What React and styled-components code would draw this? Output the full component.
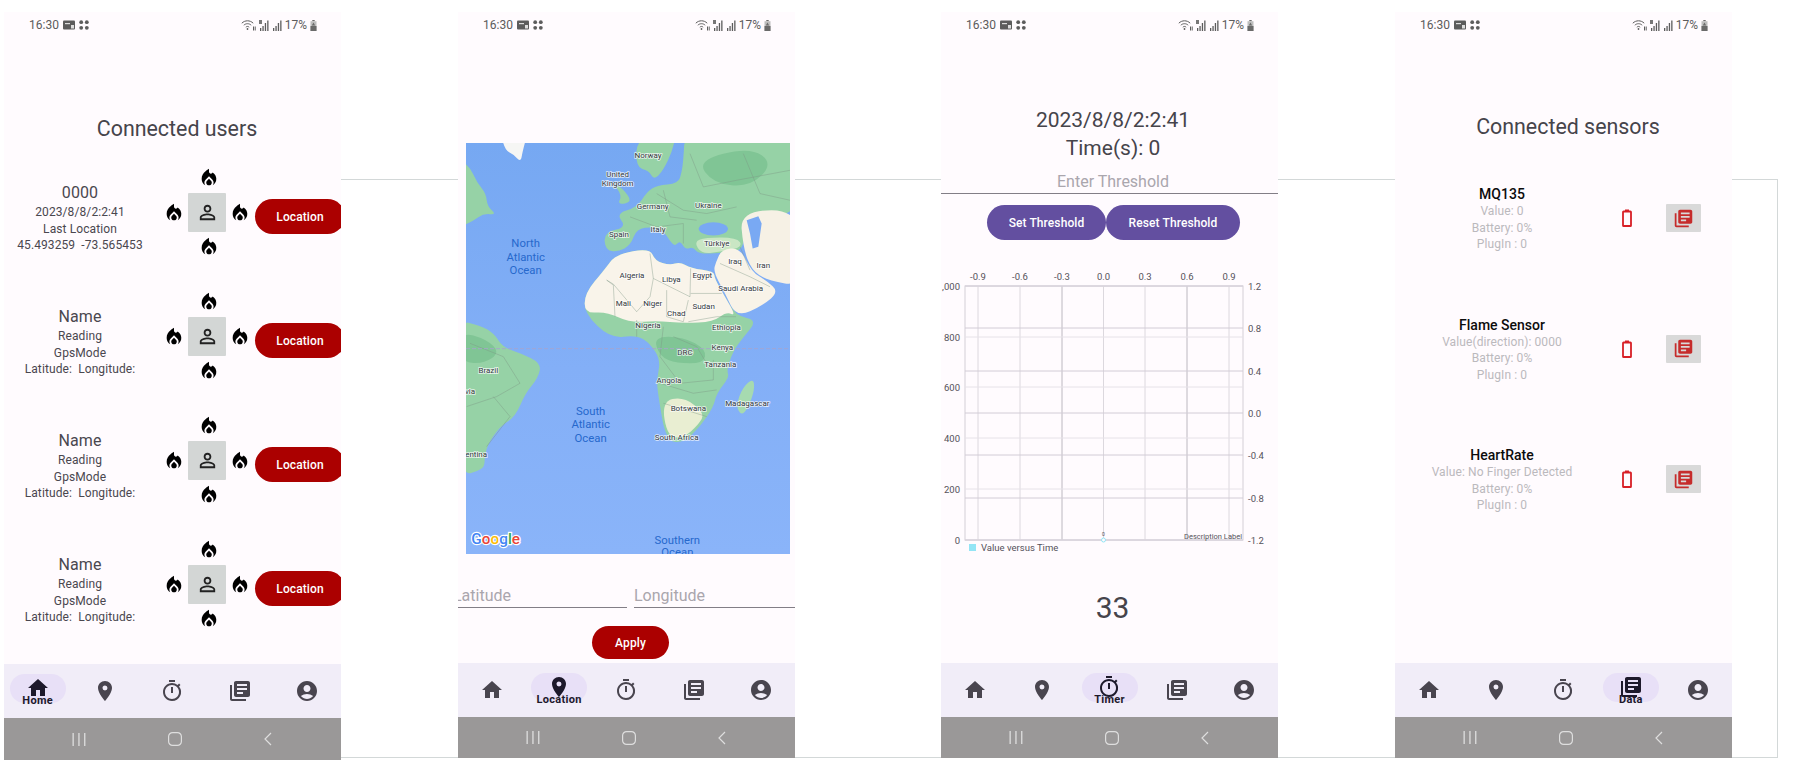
import React from 'react'
import styled, { createGlobalStyle } from 'styled-components'
import {
  MdHome,
  MdPlace,
  MdOutlineTimer,
  MdLibraryBooks,
  MdAccountCircle,
  MdLocalFireDepartment,
  MdPersonOutline,
} from 'react-icons/md'

const GlobalStyle = createGlobalStyle`
  html, body { margin: 0; padding: 0; background: #fff; }
  body { font-family: Roboto, "Liberation Sans", sans-serif; }
`

const Page = styled.div`
  position: relative;
  width: 1798px;
  height: 782px;
  overflow: hidden;
  display: flex;
  align-items: flex-start;
  padding: 12px 0 0 4px;
  box-sizing: border-box;
  background: #fff;
`

/* wires running behind the phones */
const Wires = styled.div`
  position: absolute;
  left: 341px;
  top: 179px;
  width: 1437px;
  height: 579px;
  box-sizing: border-box;
  border: 1.5px solid #d3d8d8;
  border-left: 0;
`

const Phone = styled.div`
  position: relative;
  z-index: 1;
  flex: none;
  width: 337px;
  height: ${p => p.$height}px;
  margin-left: ${p => p.$gap}px;
  background: #fffbfe;
  overflow: hidden;
  display: flex;
  flex-direction: column;
`

const StatusRow = styled.div`
  flex: none;
  height: 26px;
  padding: 0 24px 0 25px;
  display: flex;
  align-items: center;
  justify-content: space-between;
  font-size: 12px;
  color: #5c5c5c;
`

const StatusGroup = styled.div`
  display: flex;
  align-items: center;
  gap: ${p => p.$gap}px;
`

const Screen = styled.div`
  flex: 1;
  min-height: 0;
  display: flex;
  flex-direction: column;
`

const Title = styled.div`
  margin-top: ${p => p.$top}px;
  padding-left: 9px;
  font-size: 21.4px;
  line-height: 28px;
  color: #46444b;
  text-align: center;
`

/* ---------- users screen ---------- */
const UserList = styled.div`
  margin-top: 27px;
  display: flex;
  flex-direction: column;
  gap: 38px;
`

const UserRow = styled.div`
  height: 86px;
  display: flex;
  align-items: flex-start;
`

const UserInfo = styled.div`
  flex: none;
  width: 152px;
  padding-top: 12px;
  text-align: center;
  color: #4a474f;
  font-size: 12px;
  line-height: 16.5px;
  letter-spacing: 0.1px;
`

const UserName = styled.div`
  font-size: 16px;
  line-height: 22px;
`

const Cross = styled.div`
  flex: none;
  margin-left: 7px;
  display: grid;
  grid-template-columns: 22px 38px 22px;
  grid-template-rows: 16px 39px 16px;
  column-gap: 3px;
  row-gap: 7px;
  place-items: center;
`

const TopFlame = styled.div`
  grid-column: 2;
  grid-row: ${p => p.$row};
  display: flex;
  margin-left: 4px;
`

const SideFlame = styled.div`
  grid-column: ${p => p.$col};
  grid-row: 2;
  display: flex;
`

const PersonBox = styled.div`
  grid-column: 2;
  grid-row: 2;
  width: 38px;
  height: 39px;
  background: #d3d6d5;
  border-radius: 1px;
  display: flex;
  align-items: center;
  justify-content: center;
  color: #222;
`

const RedButton = styled.div`
  flex: none;
  width: ${p => p.$width}px;
  height: ${p => p.$height}px;
  margin-top: ${p => p.$top || 0}px;
  margin-left: ${p => p.$left || 0}px;
  border-radius: 18px;
  background: #ab0000;
  color: #fff;
  font-size: 12px;
  font-weight: 500;
  letter-spacing: 0.1px;
  display: flex;
  align-items: center;
  justify-content: center;
`

/* ---------- location screen ---------- */
const MapFrame = styled.div`
  margin: 105px 5px 0 8px;
  height: 411px;
  overflow: hidden;
`

const CoordRow = styled.div`
  margin-top: 28px;
  display: flex;
  gap: 7px;
`

const CoordField = styled.div`
  flex: ${p => p.$flex};
  height: 25px;
  line-height: 27px;
  font-size: 16px;
  color: #aaa6ad;
  border-bottom: 1.5px solid #827e86;
  white-space: nowrap;
  text-indent: ${p => p.$indent || 0}px;
`

const ApplyRow = styled.div`
  margin-top: 18px;
  display: flex;
  padding-left: 134px;
`

/* ---------- timer screen ---------- */
const Stamp = styled.div`
  font-size: 21px;
  line-height: 28px;
  padding-left: 7px;
  color: #46444b;
  text-align: center;
  margin-top: ${p => p.$top || 0}px;
`

const ThresholdField = styled.div`
  margin-top: 9px;
  height: 22px;
  padding-left: 7px;
  line-height: 22px;
  font-size: 16px;
  color: #aaa6ad;
  text-align: center;
  border-bottom: 1.5px solid #827e86;
`

const ThresholdButtons = styled.div`
  margin-top: 11px;
  padding-left: 46px;
  display: flex;
`

const PurpleButton = styled.div`
  width: ${p => p.$width}px;
  height: 35px;
  border-radius: 18px;
  background: #634fa0;
  color: #fff;
  font-size: 12px;
  font-weight: 500;
  letter-spacing: 0.1px;
  display: flex;
  align-items: center;
  justify-content: center;
`

const ChartFrame = styled.div`
  margin-top: 30px;
  height: 290px;
`

const Counter = styled.div`
  margin-top: 30px;
  padding-left: 6px;
  font-size: 30px;
  line-height: 36px;
  color: #46444b;
  text-align: center;
`

/* ---------- data screen ---------- */
const SensorList = styled.div`
  margin-top: 45px;
  display: flex;
  flex-direction: column;
  gap: 62.5px;
`

const SensorRow = styled.div`
  height: 68px;
  display: flex;
  align-items: flex-start;
`

const SensorInfo = styled.div`
  flex: none;
  width: 214px;
  text-align: center;
  color: #bbb9bd;
  font-size: 12px;
  line-height: 16.5px;
  letter-spacing: 0.1px;
`

const SensorName = styled.div`
  color: #0c0c0c;
  font-size: 14px;
  font-weight: 500;
  line-height: 17px;
  letter-spacing: 0;
`

const SensorActions = styled.div`
  margin: 18px 0 0 13px;
  display: flex;
  align-items: center;
  gap: 34px;
`

const DataBox = styled.div`
  width: 35px;
  height: 28px;
  background: #d9d9d9;
  border-radius: 1px;
  display: flex;
  align-items: center;
  justify-content: center;
  color: #c62c2c;
`

/* ---------- bottom bars ---------- */
const NavBar = styled.div`
  flex: none;
  height: 54px;
  background: #f1edf8;
  display: grid;
  grid-template-columns: repeat(5, 1fr);
`

const NavItem = styled.div`
  position: relative;
  display: flex;
  align-items: center;
  justify-content: center;
  color: ${p => (p.$active ? '#1d192b' : '#49454f')};
`

const NavPill = styled.div`
  position: absolute;
  left: 6px;
  top: 10px;
  width: 56px;
  height: 29px;
  border-radius: 15px;
  background: #e8e0f7;
`

const NavIcon = styled.div`
  position: relative;
  display: flex;
  margin-top: ${p => (p.$active ? -6 : 0)}px;
`

const NavLabel = styled.div`
  position: absolute;
  left: 0;
  right: 0;
  top: 30px;
  font-size: 11px;
  line-height: 13px;
  font-weight: 700;
  letter-spacing: 0.3px;
  text-align: center;
  color: #1d192b;
`

const SystemBar = styled.div`
  flex: none;
  height: ${p => p.$height}px;
  background: #9a9898;
  display: flex;
  align-items: center;
  padding-left: 68px;
  gap: 82px;
`

const navItems = [
  { name: 'Home', Icon: MdHome },
  { name: 'Location', Icon: MdPlace },
  { name: 'Timer', Icon: MdOutlineTimer },
  { name: 'Data', Icon: MdLibraryBooks },
  { name: 'Profile', Icon: MdAccountCircle },
]

const users = [
  { name: '0000', lines: ['2023/8/8/2:2:41', 'Last Location', '45.493259\u00a0\u00a0-73.565453'] },
  { name: 'Name', lines: ['Reading', 'GpsMode', 'Latitude:\u00a0\u00a0Longitude:'] },
  { name: 'Name', lines: ['Reading', 'GpsMode', 'Latitude:\u00a0\u00a0Longitude:'] },
  { name: 'Name', lines: ['Reading', 'GpsMode', 'Latitude:\u00a0\u00a0Longitude:'] },
]

const sensors = [
  { name: 'MQ135', value: 'Value: 0' },
  { name: 'Flame Sensor', value: 'Value(direction): 0000' },
  { name: 'HeartRate', value: 'Value: No Finger Detected' },
]

const mapLabels = [
  ['Norway', 594, 77], ['United', 503, 132], ['Kingdom', 503, 161], ['Germany', 608, 228],
  ['Ukraine', 775, 227], ['Spain', 507, 312], ['Italy', 624, 297], ['Türkiye', 800, 339],
  ['Iraq', 855, 395], ['Iran', 940, 407], ['Algeria', 546, 436], ['Libya', 664, 447],
  ['Egypt', 757, 436], ['Saudi Arabia', 872, 475], ['Mali', 520, 521], ['Niger', 608, 521],
  ['Sudan', 761, 528], ['Chad', 679, 550], ['Nigeria', 594, 586], ['Ethiopia', 829, 592],
  ['Kenya', 817, 654], ['DRC', 705, 669], ['Tanzania', 811, 705], ['Brazil', 115, 721],
  ['Bolivia', 40, 784], ['Angola', 657, 751], ['Madagascar', 892, 821], ['Botswana', 715, 836],
  ['South Africa', 680, 923], ['Argentina', 60, 975],
]

const oceanLabels = [
  ['North', 227, 340], ['Atlantic', 227, 380], ['Ocean', 227, 420],
  ['South', 422, 843], ['Atlantic', 422, 883], ['Ocean', 422, 923],
  ['Southern', 682, 1230], ['Ocean', 682, 1268],
]

const mapBorders = [
  'M470 450 L490 465 L495 560',
  'M470 450 L490 462 L560 545 L600 500 L610 445 L600 370',
  'M610 445 L720 500 L722 415',
  'M722 490 L815 490',
  'M650 480 L650 560 L700 575 L715 510',
  'M715 575 L800 560 L858 560',
  'M560 570 L560 620',
  'M640 590 L630 680 L690 760 L790 750 L790 690',
  'M670 620 L740 650 L770 700',
  'M630 760 L730 790 L800 780',
  'M640 820 L770 860',
  'M810 400 L900 440 L960 470',
  'M870 350 L900 420',
  'M620 190 L700 240 L770 250 L860 230',
  'M540 260 L620 290 L700 280 L700 340',
  'M640 180 L660 260 L740 270',
  'M60 640 L160 680 L210 760 L140 800 L50 830',
  'M110 950 L180 860 L130 800',
  'M720 70 L760 170 L860 150 L1020 120',
  'M880 70 L930 190 L1020 210',
]

// rounds a polygon off by running curves through the middle of its edges
const smooth = points => {
  const mid = (a, b) => `${(a[0] + b[0]) / 2} ${(a[1] + b[1]) / 2}`
  const last = points[points.length - 1]
  let d = `M${mid(last, points[0])}`
  points.forEach((p, i) => {
    d += ` Q${p[0]} ${p[1]} ${mid(p, points[(i + 1) % points.length])}`
  })
  return d + ' Z'
}

const land = [
  // greenland
  { fill: '#f6f6f4', pts: [[150, 0], [235, 0], [218, 62], [212, 96], [190, 72], [165, 60]] },
  // north america
  { fill: '#96d2a6', pts: [[20, 80], [60, 110], [80, 155], [108, 190], [112, 228], [140, 254], [100, 250], [70, 272], [20, 295]] },
  // south america
  { fill: '#96d2a6', pts: [[20, 570], [90, 586], [132, 610], [158, 652], [212, 670], [274, 700], [264, 745], [226, 790], [196, 860], [150, 890], [112, 945], [104, 985], [102, 1020], [20, 1040]] },
  { fill: '#80c595', pts: [[30, 605], [110, 628], [150, 668], [100, 702], [30, 695]] },
  // scandinavia
  { fill: '#96d2a6', pts: [[560, 20], [680, 0], [668, 60], [640, 120], [612, 150], [596, 120], [558, 112]] },
  // europe and russia
  { fill: '#96d2a6', pts: [[705, 0], [1060, 0], [1060, 260], [880, 250], [885, 360], [820, 368], [745, 372], [730, 350], [705, 358], [690, 330], [672, 352], [640, 300], [610, 290], [560, 295], [542, 345], [505, 365], [466, 360], [462, 306], [530, 292], [498, 250], [560, 232], [590, 186], [620, 165], [685, 160], [695, 125], [700, 90]] },
  { fill: '#80c595', pts: [[740, 90], [900, 50], [970, 100], [900, 170], [790, 160]] },
  // britain
  { fill: '#96d2a6', pts: [[490, 160], [518, 175], [548, 215], [502, 224], [516, 195]] },
  // middle east
  { fill: '#c9e6c4', pts: [[732, 335], [765, 322], [860, 322], [880, 350], [815, 364], [755, 372]] },
  { fill: '#f6f1e5', pts: [[870, 240], [1060, 240], [1060, 470], [950, 450], [905, 420], [880, 355]] },
  { fill: '#f8f3e8', pts: [[798, 395], [815, 358], [870, 352], [905, 425], [950, 452], [986, 485], [940, 525], [860, 562], [825, 490], [790, 425]] },
  // africa
  { fill: '#96d2a6', pts: [[498, 372], [600, 354], [615, 392], [660, 405], [690, 395], [722, 414], [792, 424], [794, 445], [822, 495], [858, 558], [922, 570], [880, 622], [850, 662], [830, 720], [838, 742], [800, 790], [790, 832], [750, 890], [700, 940], [648, 932], [625, 800], [620, 750], [632, 690], [600, 640], [560, 615], [480, 625], [404, 550], [404, 490], [462, 420]] },
  { fill: '#f9f4ea', pts: [[498, 372], [600, 354], [615, 392], [660, 405], [690, 395], [722, 414], [792, 424], [794, 445], [822, 495], [858, 558], [830, 545], [790, 575], [700, 580], [620, 572], [540, 578], [470, 545], [404, 550], [404, 490], [462, 420]] },
  { fill: '#80c595', pts: [[610, 620], [700, 620], [770, 660], [760, 700], [680, 700], [630, 680]] },
  { fill: '#e9eed2', pts: [[635, 815], [700, 800], [765, 850], [745, 885], [700, 925], [652, 920]] },
  // madagascar
  { fill: '#a6dab0', pts: [[878, 772], [910, 745], [914, 780], [893, 838], [873, 856], [858, 828]] },
]

function WorldMap() {
  return (
    <svg width="324" height="411" viewBox="48 38 972 1235" preserveAspectRatio="none">
      <defs>
        <linearGradient id="sea" x1="0" y1="0" x2="0" y2="1">
          <stop offset="0" stopColor="#76a8f2" />
          <stop offset="0.55" stopColor="#83aff7" />
          <stop offset="1" stopColor="#8ab4f9" />
        </linearGradient>
      </defs>
      <rect x="48" y="38" width="972" height="1235" fill="url(#sea)" />
      {land.map((shape, i) => (
        <path key={i} d={smooth(shape.pts)} fill={shape.fill} />
      ))}
      {/* seas */}
      <ellipse cx="790" cy="296" rx="44" ry="20" fill="#79a9f3" />
      <path d="M890 270 L925 258 L935 280 L925 350 L908 355 L900 310 Z" fill="#79a9f3" />
      {/* borders */}
      {mapBorders.map((d, i) => (
        <path key={i} d={d} fill="none" stroke="#7b9484" strokeWidth="1.2" />
      ))}
      <line x1="48" y1="656" x2="1020" y2="656" stroke="#a6a4cc" strokeWidth="2.5" strokeDasharray="12 6" />
      {/* labels */}
      {mapLabels.map(([text, x, y]) => (
        <text key={text} x={x} y={y} fontFamily="Roboto" fontSize="24" textAnchor="middle" dominantBaseline="central" fill="#33393d" stroke="#fff" strokeWidth="5" strokeOpacity="0.75" paintOrder="stroke">{text}</text>
      ))}
      {oceanLabels.map(([text, x, y]) => (
        <text key={text + y} x={x} y={y} fontFamily="Roboto" fontSize="34" textAnchor="middle" dominantBaseline="central" fill="#2668cc">{text}</text>
      ))}
      <text x="64" y="1244" fontFamily="Roboto" fontSize="46" fontWeight="500" stroke="#fff" strokeWidth="7" paintOrder="stroke">
        <tspan fill="#4285f4">G</tspan>
        <tspan fill="#ea4335">o</tspan>
        <tspan fill="#fbbc05">o</tspan>
        <tspan fill="#4285f4">g</tspan>
        <tspan fill="#34a853">l</tspan>
        <tspan fill="#ea4335">e</tspan>
      </text>
    </svg>
  )
}

const plotLeft = 24
const plotRight = 302
const plotTop = 16
const plotBottom = 270
const gridX = [-0.9, -0.6, -0.3, 0, 0.3, 0.6, 0.9]
const gridXPos = [37, 79, 121, 162.5, 204, 246, 288]
const leftTicks = [['1,000', 16], ['800', 67], ['600', 117], ['400', 168], ['200', 219], ['0', 270]]
const rightTicks = [['1.2', 16], ['0.8', 58], ['0.4', 101], ['0.0', 143], ['-0.4', 185], ['-0.8', 228], ['-1.2', 270]]

function Chart() {
  return (
    <svg width="337" height="290" viewBox="0 0 337 290" fontFamily="Roboto" fontSize="9.5" fill="#55525a">
      <rect x={plotLeft} y={plotTop} width={plotRight - plotLeft} height={plotBottom - plotTop} fill="none" stroke="#d4cfd6" />
      {gridXPos.map((x, i) => (
        <g key={x}>
          <line x1={x} y1={plotTop} x2={x} y2={plotBottom} stroke={i % 3 === 2 ? '#bcb8c0' : '#dcd8de'} />
          <text x={x} y="10" textAnchor="middle">{gridX[i].toFixed(1)}</text>
        </g>
      ))}
      {leftTicks.map(([label, y]) => (
        <g key={label}>
          <line x1={plotLeft} y1={y} x2={plotRight} y2={y} stroke="#e6e2e8" />
          <text x="19" y={y + 3.5} textAnchor="end">{label}</text>
        </g>
      ))}
      {rightTicks.map(([label, y]) => (
        <g key={label}>
          <line x1={plotLeft} y1={y} x2={plotRight} y2={y} stroke="#d2ccd6" />
          <text x="307" y={y + 3.5}>{label}</text>
        </g>
      ))}
      <text x="301" y="269" textAnchor="end" fontSize="7.5">Description Label</text>
      <text x="162.5" y="266" textAnchor="middle" fontSize="5">0</text>
      <circle cx="162.5" cy="270" r="2" fill="#fffbfe" stroke="#93e5f5" />
      <rect x="28" y="274" width="7" height="7" fill="#93e5f5" />
      <text x="40" y="281">Value versus Time</text>
    </svg>
  )
}

function BatteryEmpty() {
  return (
    <svg width="10" height="18" viewBox="0 0 10 18">
      <rect x="3" y="0.5" width="4" height="2.5" fill="#d81f26" />
      <rect x="1" y="2.5" width="8" height="14.5" rx="0.6" fill="none" stroke="#d81f26" strokeWidth="1.8" />
    </svg>
  )
}

function CardIcon() {
  return (
    <svg width="12" height="10" viewBox="0 0 12 10">
      <rect x="0" y="0.5" width="12" height="9" rx="1" fill="#5c5c5c" />
      <rect x="2" y="3" width="5" height="1.2" fill="#ddd" />
      <rect x="8" y="5" width="3" height="3.5" fill="#ddd" />
    </svg>
  )
}

function DotsIcon() {
  return (
    <svg width="10" height="10" viewBox="0 0 10 10" fill="#5c5c5c">
      <circle cx="2.2" cy="2.2" r="1.9" />
      <circle cx="7.8" cy="2.2" r="1.9" />
      <circle cx="2.2" cy="7.8" r="1.9" />
      <circle cx="7.8" cy="7.8" r="1.9" />
    </svg>
  )
}

function WifiIcon() {
  return (
    <svg width="15" height="11" viewBox="0 0 15 11" fill="none" stroke="#5c5c5c" strokeWidth="1">
      <path d="M0.8 3.2 C4 0 9 0 12.2 3.2" />
      <path d="M2.8 5.2 C5 3.2 8 3.2 10.2 5.2" />
      <path d="M4.8 7.2 C6 6.2 7 6.2 8.2 7.2" />
      <circle cx="6.5" cy="9" r="0.9" fill="#5c5c5c" stroke="none" />
      <path d="M12.5 6.5 V10.5 M14.2 6.5 V10.5" />
    </svg>
  )
}

function SignalIcon({ tag }) {
  return (
    <svg width="10" height="11" viewBox="0 0 10 11" fill="#5c5c5c">
      {tag && <rect x="0" y="0" width="3" height="4" fill="#777" />}
      <rect x="1" y="8" width="1.3" height="3" />
      <rect x="3.4" y="6" width="1.3" height="5" />
      <rect x="5.8" y="3" width="1.3" height="8" />
      <rect x="8.2" y="0.5" width="1.3" height="10.5" />
    </svg>
  )
}

function ChargeIcon() {
  return (
    <svg width="7" height="11" viewBox="0 0 7 11" fill="#6a6a6a">
      <rect x="2.3" y="0" width="2.4" height="1.2" />
      <rect x="0.5" y="1.2" width="6" height="9.8" fill="#bdbdbd" />
      <rect x="0.5" y="6" width="6" height="5" />
      <path d="M3.5 2.5 L5.2 5.5 H1.8 Z" />
    </svg>
  )
}

function BackIcon() {
  return (
    <svg width="8" height="14" viewBox="0 0 8 14" fill="none" stroke="#dedede" strokeWidth="1.2">
      <path d="M7 1 L1 7 L7 13" />
    </svg>
  )
}

function RecentsIcon() {
  return (
    <svg width="14" height="13" viewBox="0 0 14 13" fill="#dedede">
      <rect x="0.5" y="0" width="1.3" height="13" />
      <rect x="6.3" y="0" width="1.3" height="13" />
      <rect x="12.1" y="0" width="1.3" height="13" />
    </svg>
  )
}

function HomeKeyIcon() {
  return (
    <svg width="14" height="14" viewBox="0 0 14 14" fill="none" stroke="#dedede" strokeWidth="1.2">
      <rect x="0.6" y="0.6" width="12.8" height="12.8" rx="4" />
    </svg>
  )
}

function Device({ active, gap, height, barHeight, children }) {
  return (
    <Phone $gap={gap} $height={height}>
      <StatusRow>
        <StatusGroup $gap={4}>
          <span>16:30</span>
          <CardIcon />
          <DotsIcon />
        </StatusGroup>
        <StatusGroup $gap={3}>
          <WifiIcon />
          <SignalIcon tag />
          <SignalIcon />
          <span>17%</span>
          <ChargeIcon />
        </StatusGroup>
      </StatusRow>
      <Screen>{children}</Screen>
      <NavBar>
        {navItems.map(({ name, Icon }) => {
          const on = name === active
          return (
            <NavItem key={name} $active={on}>
              {on && <NavPill />}
              <NavIcon $active={on}><Icon size={24} /></NavIcon>
              {on && <NavLabel>{name}</NavLabel>}
            </NavItem>
          )
        })}
      </NavBar>
      <SystemBar $height={barHeight}>
        <RecentsIcon />
        <HomeKeyIcon />
        <BackIcon />
      </SystemBar>
    </Phone>
  )
}

function Flame() {
  return <MdLocalFireDepartment size={22} color="#000" />
}

function App() {
  return (
    <Page>
      <GlobalStyle />
      <Wires />

      <Device active="Home" gap={0} height={748} barHeight={42}>
        <Title $top={77}>Connected users</Title>
        <UserList>
          {users.map((user, i) => (
            <UserRow key={i}>
              <UserInfo>
                <UserName>{user.name}</UserName>
                {user.lines.map(line => <div key={line}>{line}</div>)}
              </UserInfo>
              <Cross>
                <TopFlame $row={1}><Flame /></TopFlame>
                <SideFlame $col={1}><Flame /></SideFlame>
                <PersonBox><MdPersonOutline size={23} /></PersonBox>
                <SideFlame $col={3}><Flame /></SideFlame>
                <TopFlame $row={3}><Flame /></TopFlame>
              </Cross>
              <RedButton $width={90} $height={35} $top={29} $left={4}>Location</RedButton>
            </UserRow>
          ))}
        </UserList>
      </Device>

      <Device active="Location" gap={117} height={746} barHeight={41}>
        <MapFrame><WorldMap /></MapFrame>
        <CoordRow>
          <CoordField $flex="0 0 169px" $indent={-5}>Latitude</CoordField>
          <CoordField $flex="1">Longitude</CoordField>
        </CoordRow>
        <ApplyRow><RedButton $width={77} $height={33}>Apply</RedButton></ApplyRow>
      </Device>

      <Device active="Timer" gap={146} height={746} barHeight={41}>
        <Stamp $top={68}>2023/8/8/2:2:41</Stamp>
        <Stamp>Time(s): 0</Stamp>
        <ThresholdField>Enter Threshold</ThresholdField>
        <ThresholdButtons>
          <PurpleButton $width={119}>Set Threshold</PurpleButton>
          <PurpleButton $width={134}>Reset Threshold</PurpleButton>
        </ThresholdButtons>
        <ChartFrame><Chart /></ChartFrame>
        <Counter>33</Counter>
      </Device>

      <Device active="Data" gap={117} height={746} barHeight={41}>
        <Title $top={75}>Connected sensors</Title>
        <SensorList>
          {sensors.map(sensor => (
            <SensorRow key={sensor.name}>
              <SensorInfo>
                <SensorName>{sensor.name}</SensorName>
                <div>{sensor.value}</div>
                <div>Battery: 0%</div>
                <div>PlugIn : 0</div>
              </SensorInfo>
              <SensorActions>
                <BatteryEmpty />
                <DataBox><MdLibraryBooks size={21} /></DataBox>
              </SensorActions>
            </SensorRow>
          ))}
        </SensorList>
      </Device>
    </Page>
  )
}

export default App
